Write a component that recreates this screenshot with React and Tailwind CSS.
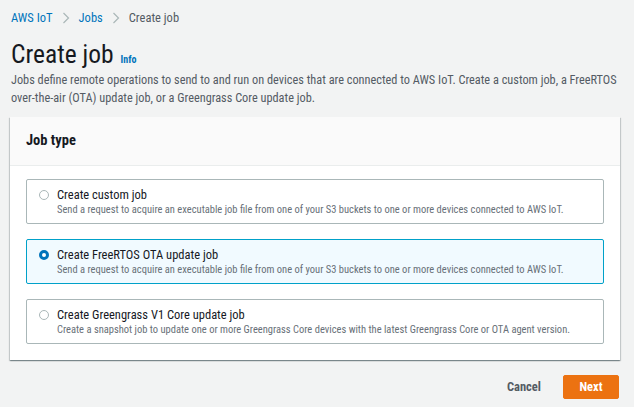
import { useState } from 'react';

const options = [
  {
    id: 'custom',
    title: 'Create custom job',
    desc: 'Send a request to acquire an executable job file from one of your S3 buckets to one or more devices connected to AWS IoT.',
  },
  {
    id: 'ota',
    title: 'Create FreeRTOS OTA update job',
    desc: 'Send a request to acquire an executable job file from one of your S3 buckets to one or more devices connected to AWS IoT.',
  },
  {
    id: 'greengrass',
    title: 'Create Greengrass V1 Core update job',
    desc: 'Create a snapshot job to update one or more Greengrass Core devices with the latest Greengrass Core or OTA agent version.',
  },
];

function Chevron() {
  return (
    <svg width="8" height="12" viewBox="0 0 8 12" className="shrink-0">
      <path d="M1.5 1 L6.5 6 L1.5 11" fill="none" stroke="#aab7b8" strokeWidth="1.2" />
    </svg>
  );
}

function App() {
  const [selected, setSelected] = useState('ota');

  return (
    <div className="w-[634px] h-[407px] bg-[#f2f3f3] font-['Roboto_Condensed','Lato',sans-serif] text-[#16191f]">
      <div className="px-[11px] pt-[8px]">
        {/* Breadcrumb */}
        <div className="flex items-center gap-[9px] text-[12.5px] h-[20px]">
          <span className="text-[#0073bb]">AWS IoT</span>
          <Chevron />
          <span className="text-[#0073bb]">Jobs</span>
          <Chevron />
          <span className="text-[#545b64]">Create job</span>
        </div>

        {/* Title */}
        <div className="flex items-baseline gap-[7px] mt-[10px]">
          <h1 className="text-[25.5px] leading-[32px]">Create job</h1>
          <span className="text-[10px] font-bold text-[#0073bb]">Info</span>
        </div>
        <p className="text-[12.3px] leading-[18px] text-[#545b64] mt-[1px] pr-[6px]">
          Jobs define remote operations to send to and run on devices that are connected to AWS IoT. Create a custom job, a FreeRTOS over-the-air (OTA) update job, or a Greengrass Core update job.
        </p>
      </div>

      {/* Card */}
      <div className="mx-[10px] w-[610px] mt-[10px] bg-white shadow-[0_1px_1px_0_rgba(0,28,36,0.3),1px_1px_1px_0_rgba(0,28,36,0.15),-1px_1px_1px_0_rgba(0,28,36,0.15)]">
        <div className="h-[49px] bg-[#fafafa] border-b border-[#eaeded] flex items-center px-[16px]">
          <h2 className="text-[14.5px] font-bold">Job type</h2>
        </div>
        <div className="px-[16px] pt-[13px] pb-[16px] flex flex-col gap-[15px]">
          {options.map((o) => {
            const active = selected === o.id;
            return (
              <button
                key={o.id}
                onClick={() => setSelected(o.id)}
                className={`h-[45px] w-[578px] text-left flex items-start gap-[8px] pl-[12px] pt-[6px] rounded-[2px] border ${
                  active ? 'bg-[#f1faff] border-[#00a1c9]' : 'bg-white border-[#aab7b8]'
                }`}
              >
                <span
                  className={`mt-[4px] w-[10px] h-[10px] rounded-full shrink-0 bg-white ${
                    active ? 'border-[3px] border-[#0073bb]' : 'border border-[#aab7b8]'
                  }`}
                />
                <span className="flex flex-col">
                  <span className="text-[12.5px] leading-[17px] text-[#16191f]">{o.title}</span>
                  <span className="text-[10.5px] leading-[14px] text-[#687078] whitespace-nowrap">{o.desc}</span>
                </span>
              </button>
            );
          })}
        </div>
      </div>

      {/* Actions */}
      <div className="flex justify-end items-center gap-[22px] pr-[15px] mt-[15px]">
        <button className="text-[12.5px] font-bold text-[#545b64]">Cancel</button>
        <button className="w-[56px] h-[24px] bg-[#ec7211] border border-[#ec7211] rounded-[2px] text-white text-[12.5px] font-bold">
          Next
        </button>
      </div>
    </div>
  );
}

export default App;
